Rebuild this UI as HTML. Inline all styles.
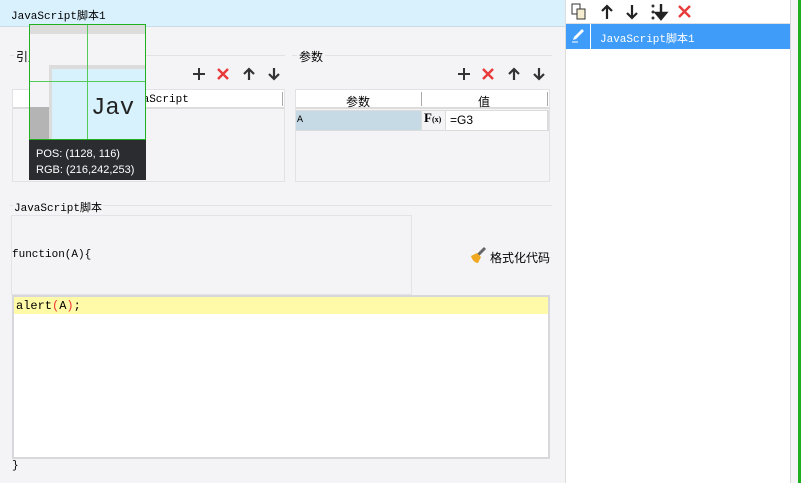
<!DOCTYPE html>
<html><head><meta charset="utf-8"><style>
*{margin:0;padding:0;box-sizing:border-box}
body{width:801px;height:483px;background:#f4f4f6;position:relative;overflow:hidden;font-family:"Liberation Sans","Noto Sans CJK SC",sans-serif;font-size:12px;color:#000}
.a{position:absolute}
.mono{font-family:"Liberation Mono","Noto Sans CJK SC",monospace;font-size:11px}
</style></head><body>
<div class="a" style="left:0;top:0;width:565px;height:27px;background:#d8f1fd;border-bottom:1px solid #c8dde8"></div>
<div class="a mono" style="left:11px;top:7px">JavaScript脚本1</div>

<div class="a" style="left:10px;top:55px;width:275px;height:1px;background:#e2e2e6"></div>
<div class="a" style="left:14px;top:48px;background:#f4f4f6;padding:0 2px">引用</div>
<svg class="a" style="left:190px;top:66px" width="95" height="16" viewBox="0 0 95 16">
<path d="M9 2v12M3 8h12" stroke="#333" stroke-width="2"/>
<path d="M28 3l10 10M38 3l-10 10" stroke="#e83a3a" stroke-width="2.4"/>
<path d="M59 14V4M54 8l5-5 5 5" stroke="#333" stroke-width="2.2" fill="none"/>
<path d="M84 2v10M79 8l5 5 5-5" stroke="#333" stroke-width="2.2" fill="none"/>
</svg>
<div class="a" style="left:12px;top:89px;width:273px;height:93px;border:1px solid #e2e2e6;background:#f4f4f6"></div>
<div class="a" style="left:13px;top:90px;width:271px;height:19px;background:#fff;border-bottom:2px solid #dcdcdc"></div>
<div class="a mono" style="left:136px;top:94px">vaScript</div>
<div class="a" style="left:282px;top:92px;width:1px;height:14px;background:#aaa"></div>

<div class="a" style="left:292px;top:55px;width:260px;height:1px;background:#e2e2e6"></div>
<div class="a" style="left:297px;top:48px;background:#f4f4f6;padding:0 2px">参数</div>
<svg class="a" style="left:455px;top:66px" width="95" height="16" viewBox="0 0 95 16">
<path d="M9 2v12M3 8h12" stroke="#333" stroke-width="2"/>
<path d="M28 3l10 10M38 3l-10 10" stroke="#e83a3a" stroke-width="2.4"/>
<path d="M59 14V4M54 8l5-5 5 5" stroke="#333" stroke-width="2.2" fill="none"/>
<path d="M84 2v10M79 8l5 5 5-5" stroke="#333" stroke-width="2.2" fill="none"/>
</svg>
<div class="a" style="left:295px;top:89px;width:255px;height:93px;border:1px solid #e2e2e6;background:#f4f4f6"></div>
<div class="a" style="left:296px;top:90px;width:253px;height:19px;background:#fff;border-bottom:2px solid #dcdcdc"></div>
<div class="a" style="left:346px;top:93px">参数</div>
<div class="a" style="left:478px;top:93px">值</div>
<div class="a" style="left:421px;top:92px;width:1px;height:14px;background:#aaa"></div>
<div class="a" style="left:547px;top:92px;width:1px;height:14px;background:#aaa"></div>
<div class="a" style="left:296px;top:110px;width:253px;height:21px;background:#dcdcdc"></div>
<div class="a" style="left:296px;top:111px;width:125px;height:19px;background:#c6dae6"></div>
<div class="a mono" style="left:297px;top:115px;font-size:10px">A</div>
<div class="a" style="left:422px;top:111px;width:23px;height:19px;background:#f4f4f6"></div>
<div class="a" style="left:424px;top:110px;font-family:'Liberation Serif',serif;font-weight:bold;font-size:13px">F<span style="font-size:8px">(x)</span></div>
<div class="a" style="left:446px;top:111px;width:101px;height:19px;background:#fff"></div>
<div class="a" style="left:450px;top:113px">=G3</div>

<div class="a" style="left:10px;top:205px;width:542px;height:1px;background:#e2e2e6"></div>
<div class="a mono" style="left:13px;top:199px;background:#f4f4f6;padding:0 1px">JavaScript脚本</div>
<div class="a" style="left:11px;top:215px;width:401px;height:80px;border:1px solid #e4e4e8"></div>
<div class="a mono" style="left:12px;top:249px">function(A){</div>
<svg class="a" style="left:469px;top:246px" width="18" height="18" viewBox="0 0 18 18">
<path d="M9 9L16 2" stroke="#666" stroke-width="3"/>
<path d="M2 10l6-3 4 4-3 6C6 17 3 14 2 10z" fill="#f0a820"/>
</svg>
<div class="a" style="left:490px;top:249px;font-size:12px">格式化代码</div>
<div class="a" style="left:12px;top:295px;width:538px;height:164px;border:2px solid #d8d8dc;background:#fff"></div>
<div class="a" style="left:14px;top:297px;width:534px;height:17px;background:#fffaa8"></div>
<div class="a mono" style="left:16px;top:299px;font-size:12px">alert<span style="color:#e33">(</span>A<span style="color:#e33">)</span>;</div>
<div class="a mono" style="left:12px;top:460px">}</div>

<div class="a" style="left:565px;top:0;width:226px;height:483px;background:#fff;border-left:1px solid #dcdcdc;border-right:1px solid #d8d8dc"></div>
<svg class="a" style="left:570px;top:2px" width="125" height="20" viewBox="0 0 125 20">
<rect x="2" y="2" width="8" height="10" fill="#fff" stroke="#333"/>
<rect x="7" y="7" width="8" height="10" fill="#f6ecd0" stroke="#333"/>
<path d="M37 17V5M32 9l5-5 5 5" stroke="#222" stroke-width="2.2" fill="none"/>
<path d="M62 3v12M57 11l5 5 5-5" stroke="#222" stroke-width="2.2" fill="none"/>
<circle cx="83" cy="4" r="1.5" fill="#333"/><circle cx="83" cy="10" r="1.5" fill="#333"/><circle cx="83" cy="16" r="1.5" fill="#333"/>
<path d="M91 2v12M86 11l5 6 5-6z" stroke="#222" stroke-width="2.4" fill="#222"/>
<path d="M109 4l11 11M120 4l-11 11" stroke="#e83a3a" stroke-width="2.4"/>
</svg>
<div class="a" style="left:566px;top:23px;width:224px;height:1px;background:#e0e0e0"></div>
<div class="a" style="left:566px;top:24px;width:224px;height:25px;background:#3f9cf8"></div>
<div class="a" style="left:590px;top:24px;width:1px;height:25px;background:#fff"></div>
<svg class="a" style="left:570px;top:28px" width="16" height="16" viewBox="0 0 16 16">
<path d="M3 12l1-3 8-8 2 2-8 8z" fill="#fff"/><path d="M2 14h6" stroke="#fff"/>
</svg>
<div class="a mono" style="left:600px;top:30px;color:#fff">JavaScript脚本1</div>
<div class="a" style="left:798px;top:0;width:3px;height:483px;background:#1eae1e"></div>

<div class="a" style="left:29px;top:24px;width:117px;height:116px;border:1px solid #20b020;background:#f4f4f6;overflow:hidden">
<div class="a" style="left:0;top:0;width:117px;height:9px;background:#dcdcdc"></div>
<div class="a" style="left:19px;top:40px;width:100px;height:80px;background:#dcdcdc"></div>
<div class="a" style="left:22px;top:44px;width:100px;height:80px;background:#d8f2fd"></div>
<div class="a" style="left:0;top:82px;width:19px;height:40px;background:#b4b4b4"></div>
<div class="a" style="left:61px;top:70px;font-family:'Liberation Mono',monospace;font-size:24px;color:#222">Jav</div>
<div class="a" style="left:57px;top:0;width:1px;height:116px;background:#5c5"></div>
<div class="a" style="left:0;top:56px;width:117px;height:1px;background:#5c5"></div>
</div>
<div class="a" style="left:29px;top:140px;width:117px;height:40px;background:#2b2c30;color:#fff;font-size:11px;padding:6px 0 0 7px;line-height:16px">POS:&nbsp;(1128, 116)<br>RGB:&nbsp;(216,242,253)</div>
</body></html>
